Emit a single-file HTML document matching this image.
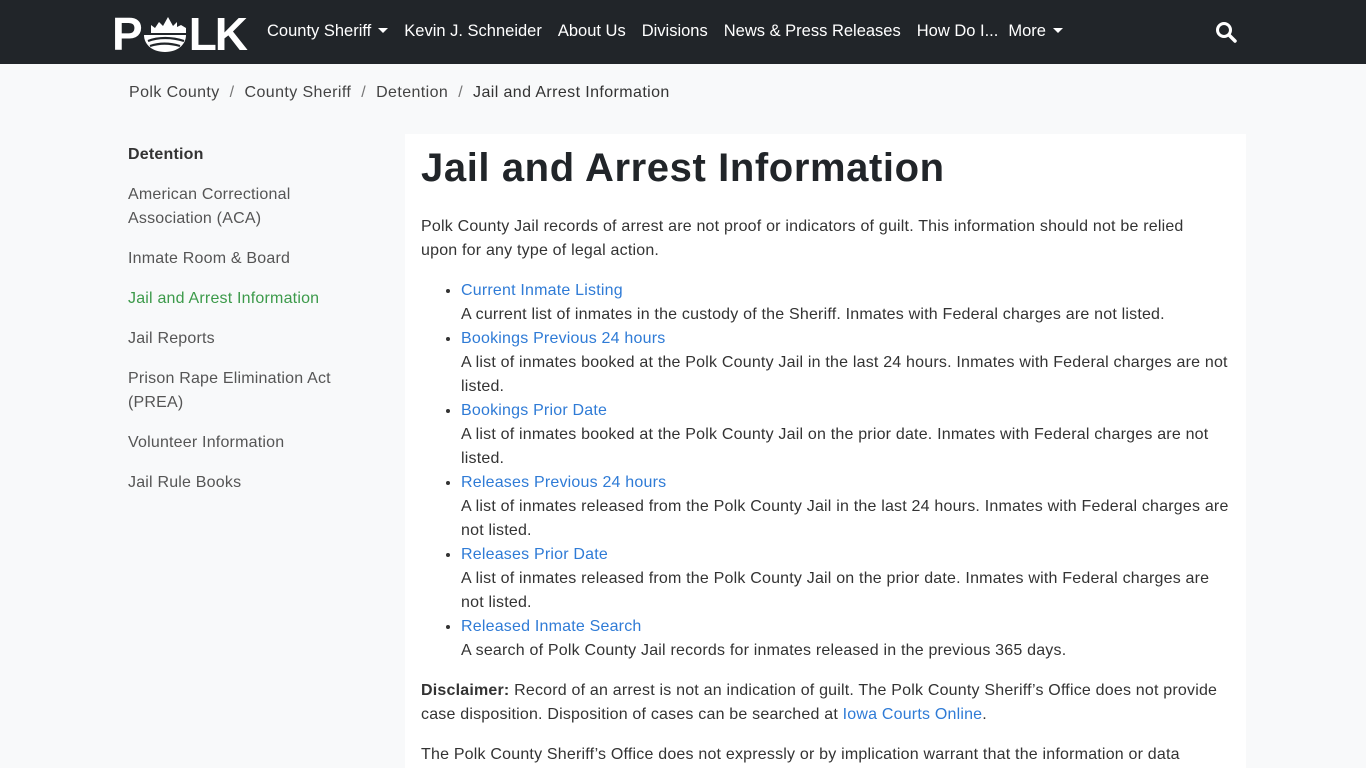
<!DOCTYPE html>
<html><head><meta charset="utf-8">
<style>
*{box-sizing:border-box;margin:0;padding:0}
html,body{width:1366px;height:768px;overflow:hidden}
body{background:#f8f9fa;font-family:"Liberation Sans",sans-serif;color:#333;font-size:16px;letter-spacing:.2px}
.nav{height:64px;background:#212529;position:relative}
.logo{position:absolute;left:112px;top:11px;color:#fff;font-weight:bold;font-size:46px;letter-spacing:-2px;line-height:46px;display:flex;align-items:center}
.nav ul{position:absolute;left:267px;top:22px;list-style:none;display:flex;color:#fff;font-size:16.5px;letter-spacing:0}
.nav li{margin-right:16px;white-space:nowrap}
.caret{display:inline-block;width:0;height:0;border-left:5px solid transparent;border-right:5px solid transparent;border-top:5px solid #fff;vertical-align:3px;margin-left:7px}
.srch{position:absolute;left:1215px;top:21px}
.bc{position:absolute;top:84px;left:129px;font-size:16px;color:#444;letter-spacing:.4px}
.bc span.s{color:#777;margin:0 10px}
.side{position:absolute;left:128px;top:143px;width:230px;font-size:16px;line-height:24px;color:#555}
.side div{margin-bottom:16px}
.card{position:absolute;left:405px;top:134px;width:841px;height:634px;background:#fff;padding:10px 16px;overflow:hidden}
h1{font-size:40px;font-weight:bold;color:#212529;letter-spacing:.6px;line-height:44px;margin-top:2px;margin-bottom:25px}
p{line-height:24px;margin-bottom:16px;color:#333}
ul.l{margin-left:40px;margin-bottom:16px;line-height:24px}
a{color:#2f7bd6;text-decoration:none}
</style></head><body>
<div class="nav">
 <div class="logo">P<svg width="46" height="38" viewBox="0 0 46 38" style="margin:0 1px"><path d="M2 18h7v-8l4 3 4-6 4 4 5-9 5 9 4-4v5l4-2 5 3v5H2z" fill="#fff"/><path d="M2 20h42c0 10-9 17-21 17S2 30 2 20z" fill="#fff"/><path d="M6 26c10-4 24-4 36 0M8 31c9-3 20-3 30 0" stroke="#212529" stroke-width="2.2" fill="none"/></svg>LK</div>
 <ul><li>County Sheriff<span class="caret"></span></li><li>Kevin J. Schneider</li><li>About Us</li><li>Divisions</li><li>News &amp; Press Releases</li><li style="margin-right:10px">How Do I...</li><li>More<span class="caret"></span></li></ul>
 <svg class="srch" width="22" height="22" viewBox="0 0 22 22"><circle cx="9" cy="9" r="6.5" stroke="#fff" stroke-width="3" fill="none"/><path d="M14 14l6 6" stroke="#fff" stroke-width="3.5" stroke-linecap="round"/></svg>
</div>
<div class="bc">Polk County<span class="s">/</span>County Sheriff<span class="s">/</span>Detention<span class="s">/</span><span style="color:#333">Jail and Arrest Information</span></div>
<div class="side">
 <div style="font-weight:bold;color:#333">Detention</div>
 <div>American Correctional Association (ACA)</div>
 <div>Inmate Room &amp; Board</div>
 <div style="color:#3c9a4a">Jail and Arrest Information</div>
 <div>Jail Reports</div>
 <div>Prison Rape Elimination Act (PREA)</div>
 <div>Volunteer Information</div>
 <div>Jail Rule Books</div>
</div>
<div class="card">
<h1>Jail and Arrest Information</h1>
<p>Polk County Jail records of arrest are not proof or indicators of guilt. This information should not be relied<br>upon for any type of legal action.</p>
<ul class="l">
<li><a>Current Inmate Listing</a><br>A current list of inmates in the custody of the Sheriff. Inmates with Federal charges are not listed.</li>
<li><a>Bookings Previous 24 hours</a><br>A list of inmates booked at the Polk County Jail in the last 24 hours. Inmates with Federal charges are not<br>listed.</li>
<li><a>Bookings Prior Date</a><br>A list of inmates booked at the Polk County Jail on the prior date. Inmates with Federal charges are not<br>listed.</li>
<li><a>Releases Previous 24 hours</a><br>A list of inmates released from the Polk County Jail in the last 24 hours. Inmates with Federal charges are<br>not listed.</li>
<li><a>Releases Prior Date</a><br>A list of inmates released from the Polk County Jail on the prior date. Inmates with Federal charges are<br>not listed.</li>
<li><a>Released Inmate Search</a><br>A search of Polk County Jail records for inmates released in the previous 365 days.</li>
</ul>
<p><b>Disclaimer:</b> Record of an arrest is not an indication of guilt. The Polk County Sheriff’s Office does not provide<br>case disposition. Disposition of cases can be searched at <a>Iowa Courts Online</a>.</p>
<p>The Polk County Sheriff’s Office does not expressly or by implication warrant that the information or data</p>
</div>
</body></html>
